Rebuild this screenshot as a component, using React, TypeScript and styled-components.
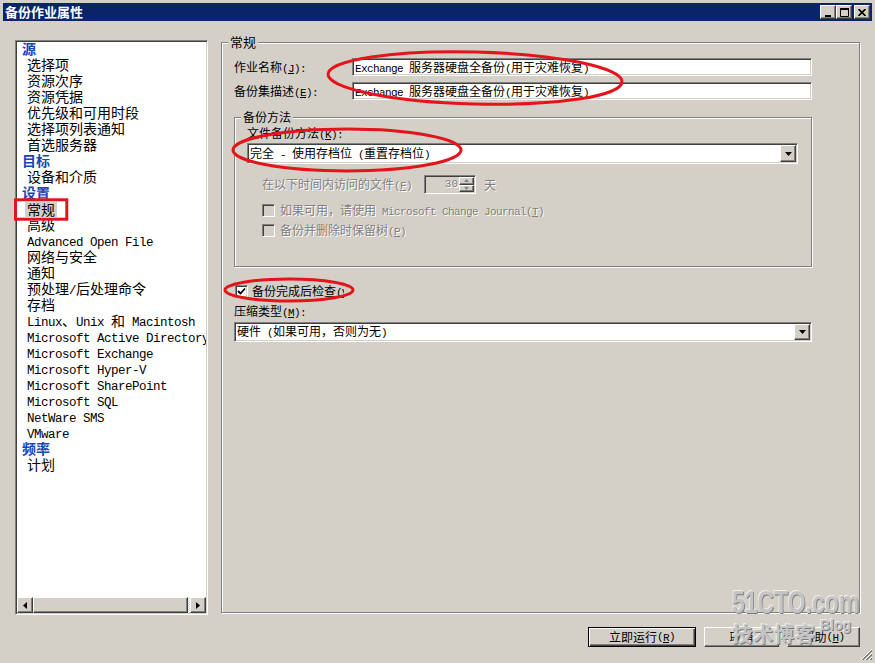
import React from "react";
import styled, { createGlobalStyle, css } from "styled-components";

const CJK = `"Noto Sans CJK SC", "Noto Sans", sans-serif`;
const MONO = `"Liberation Mono", "DejaVu Sans Mono", monospace`;

const GlobalStyle = createGlobalStyle`
  html, body { margin: 0; padding: 0; background: #d4d0c8; }
  body { font-family: ${CJK}; color: #000; }
  * { box-sizing: border-box; }
  #root { width: 875px; height: 663px; }
`;

const sunken = css`
  border: 1px solid;
  border-color: #808080 #ffffff #ffffff #808080;
  box-shadow: inset 1px 1px 0 #404040, inset -1px -1px 0 #d4d0c8;
`;

const raised = css`
  border: 1px solid;
  border-color: #ffffff #404040 #404040 #ffffff;
  box-shadow: inset -1px -1px 0 #808080;
  background: #d4d0c8;
`;

/* ---------- text helpers ---------- */
const Lat = styled.span<{ $s: number; $ls: number }>`
  font-family: ${MONO};
  font-size: ${(p) => p.$s}px;
  letter-spacing: ${(p) => p.$ls}px;
`;
const Ul = styled.span`
  text-decoration: underline;
`;

type LatSpec = { s: number; ls: number };
const SMALL: LatSpec = { s: 11, ls: -0.6 };
const LIST: LatSpec = { s: 12.5, ls: -0.5 };

function T({ s, lat }: { s: string; lat: LatSpec }) {
  const nodes: React.ReactNode[] = [];
  let buf = "";
  let bufLat = false;
  let k = 0;
  const flush = () => {
    if (!buf) return;
    nodes.push(
      bufLat ? (
        <Lat key={k++} $s={lat.s} $ls={lat.ls}>
          {buf}
        </Lat>
      ) : (
        <React.Fragment key={k++}>{buf}</React.Fragment>
      )
    );
    buf = "";
  };
  for (let i = 0; i < s.length; i++) {
    const c = s[i];
    if (c === "&" && i + 1 < s.length) {
      flush();
      const d = s[++i];
      const dl = d.charCodeAt(0) < 128;
      nodes.push(
        <Ul key={k++}>
          {dl ? (
            <Lat $s={lat.s} $ls={lat.ls}>
              {d}
            </Lat>
          ) : (
            d
          )}
        </Ul>
      );
      continue;
    }
    const isL = c.charCodeAt(0) < 128;
    if (buf && isL !== bufLat) flush();
    bufLat = isL;
    buf += c;
  }
  flush();
  return <>{nodes}</>;
}

/* ---------- window frame ---------- */
const Window = styled.div`
  position: relative;
  width: 875px;
  height: 663px;
  padding: 3px;
  background: #d4d0c8;
  display: flex;
  flex-direction: column;
  overflow: hidden;
`;

const TitleBar = styled.div`
  flex: none;
  height: 18px;
  background: #0a246a;
  display: flex;
  align-items: center;
  justify-content: space-between;
  padding: 0 2px;
`;

const TitleText = styled.span`
  color: #fff;
  font-weight: bold;
  font-size: 13px;
  line-height: 18px;
`;

const CaptionButtons = styled.div`
  display: flex;
`;

const CaptionButton = styled.div<{ $gap?: boolean }>`
  width: 16px;
  height: 14px;
  margin-left: ${(p) => (p.$gap ? 2 : 0)}px;
  ${raised};
  display: flex;
  align-items: center;
  justify-content: center;
`;

const Body = styled.div`
  flex: 1;
  display: flex;
  flex-direction: column;
  padding: 13px 12px 0 12px;
`;

const MainRow = styled.div`
  display: flex;
  gap: 13px;
  align-items: flex-start;
`;

/* ---------- navigation list ---------- */
const NavPanel = styled.div`
  margin-top: 6px;
  width: 193px;
  height: 575px;
  ${sunken};
  background: #fff;
  padding: 1px;
  display: flex;
  flex-direction: column;
`;

const NavList = styled.div`
  flex: 1;
  overflow: hidden;
`;

const NavRow = styled.div<{ $head?: boolean }>`
  height: 16px;
  line-height: 13px;
  font-size: 14px;
  white-space: nowrap;
  padding-left: ${(p) => (p.$head ? 5 : 10)}px;
  color: ${(p) => (p.$head ? "#1846b4" : "#000")};
  font-weight: ${(p) => (p.$head ? "bold" : "normal")};
`;

const Selected = styled.span`
  display: inline-block;
  height: 15px;
  line-height: 15px;
  margin-left: -2px;
  padding: 0 2px;
  background: #d4d0c8;
`;

const HScroll = styled.div`
  flex: none;
  height: 16px;
  display: flex;
`;

const ScrollBtn = styled.div`
  width: 16px;
  height: 16px;
  ${raised};
  display: flex;
  align-items: center;
  justify-content: center;
`;

const Thumb = styled.div`
  width: 155px;
  height: 16px;
  ${raised};
`;

const Track = styled.div`
  flex: 1;
  background: repeating-conic-gradient(#ffffff 0 25%, #d4d0c8 0 50%) 0 0 / 2px 2px;
`;

/* ---------- group boxes ---------- */
const GroupBox = styled.fieldset<{ $w?: number; $h?: number; $mt?: number }>`
  margin: ${(p) => p.$mt ?? 0}px 0 0 0;
  padding: 0;
  min-width: 0;
  width: ${(p) => (p.$w ? `${p.$w}px` : "auto")};
  height: ${(p) => (p.$h ? `${p.$h}px` : "auto")};
  border: 1px solid #808080;
  box-shadow: inset 1px 1px 0 #fff, 1px 1px 0 #fff;
`;

const Legend = styled.legend<{ $size: number; $lh: number }>`
  margin-left: 6px;
  padding: 0 2px;
  height: ${(p) => p.$lh}px;
  font-size: ${(p) => p.$size}px;
  line-height: ${(p) => p.$lh}px;
  background: #d4d0c8;
`;

const GroupBody = styled.div<{ $pad: string }>`
  padding: ${(p) => p.$pad};
  display: flex;
  flex-direction: column;
`;

const FormGrid = styled.div`
  display: grid;
  grid-template-columns: 118px 1fr;
  row-gap: 6px;
  align-items: center;
`;

const Label = styled.label<{ $mt?: number; $mb?: number }>`
  display: block;
  height: 14px;
  font-size: 12px;
  line-height: 14px;
  white-space: nowrap;
  margin-top: ${(p) => p.$mt ?? 0}px;
  margin-bottom: ${(p) => p.$mb ?? 0}px;
`;

const TextBox = styled.div`
  height: 18px;
  ${sunken};
  background: #fff;
  padding: 0 2px 0 2px;
  font-size: 12px;
  line-height: 16px;
  white-space: nowrap;
  overflow: hidden;
`;

const Combo = styled.div<{ $h: number }>`
  flex: none;
  height: ${(p) => p.$h}px;
  ${sunken};
  background: #fff;
  padding: 1px;
  display: flex;
`;

const ComboText = styled.div`
  flex: 1;
  font-size: 12px;
  line-height: 14px;
  padding-left: 1px;
  white-space: nowrap;
  overflow: hidden;
  display: flex;
  align-items: center;
`;

const ComboButton = styled.div`
  width: 16px;
  ${raised};
  display: flex;
  align-items: center;
  justify-content: center;
`;

const OptionRow = styled.div<{ $mt: number; $pl: number; $h: number }>`
  flex: none;
  display: flex;
  align-items: center;
  height: ${(p) => p.$h}px;
  margin-top: ${(p) => p.$mt}px;
  padding-left: ${(p) => p.$pl}px;
`;

const DimText = styled.span<{ $w?: number }>`
  color: #808080;
  text-shadow: 1px 1px 0 #fff;
  font-size: 12px;
  line-height: 14px;
  white-space: nowrap;
  ${(p) => (p.$w ? `width: ${p.$w}px; flex: none;` : "")}
`;

const Spin = styled.div`
  width: 52px;
  height: 19px;
  ${sunken};
  background: #d4d0c8;
  padding: 1px;
  display: flex;
`;

const SpinValue = styled.div`
  flex: 1;
  text-align: right;
  padding-right: 1px;
  font-family: ${MONO};
  font-size: 11px;
  line-height: 15px;
  color: #808080;
  text-shadow: 1px 1px 0 #fff;
`;

const SpinButtons = styled.div`
  width: 15px;
  display: flex;
  flex-direction: column;
`;

const SpinButton = styled.div`
  flex: 1;
  ${raised};
  display: flex;
  align-items: center;
  justify-content: center;
`;

const DimUnit = styled(DimText)`
  margin-left: 8px;
`;

const CheckBox = styled.span<{ $disabled?: boolean }>`
  width: 13px;
  height: 13px;
  flex: none;
  ${sunken};
  background: ${(p) => (p.$disabled ? "#d4d0c8" : "#fff")};
  display: inline-flex;
  align-items: center;
  justify-content: center;
`;

const CheckLabel = styled.span<{ $gap: number; $clip?: number }>`
  margin-left: ${(p) => p.$gap}px;
  height: 14px;
  font-size: 12px;
  line-height: 14px;
  white-space: nowrap;
  overflow: hidden;
  ${(p) => (p.$clip ? `width: ${p.$clip}px; flex: none;` : "")}
`;

/* ---------- dialog buttons ---------- */
const ButtonRow = styled.div`
  display: flex;
  justify-content: flex-end;
  gap: 8px;
  margin-top: 12px;
`;

const PushButton = styled.div<{ $w: number; $default?: boolean }>`
  width: ${(p) => p.$w}px;
  height: 20px;
  font-size: 12px;
  line-height: 14px;
  display: flex;
  align-items: center;
  justify-content: center;
  background: #d4d0c8;
  ${(p) =>
    p.$default
      ? css`
          border: 1px solid #000;
          box-shadow: inset 1px 1px 0 #fff, inset -1px -1px 0 #404040,
            inset -2px -2px 0 #808080;
        `
      : raised};
`;

/* ---------- overlays ---------- */
const Watermark = styled.div`
  position: absolute;
  left: 732px;
  top: 586px;
  width: 135px;
  pointer-events: none;
  color: #c4c4c4;
  text-shadow: 1px 1px 0 #7c7c7c, -1px -1px 0 #efefef;
`;

const WmBig = styled.div`
  font-family: "Liberation Sans", sans-serif;
  font-weight: bold;
  font-size: 31px;
  line-height: 34px;
  transform: scaleX(0.74);
  transform-origin: left center;
  white-space: nowrap;
`;

const WmLine = styled.div`
  display: flex;
  align-items: flex-start;
  margin-top: 2px;
`;

const WmCjk = styled.span`
  font-weight: bold;
  font-size: 20px;
  line-height: 24px;
  letter-spacing: 1px;
`;

const WmBlog = styled.span`
  font-family: "Liberation Sans", sans-serif;
  font-weight: bold;
  font-size: 14px;
  line-height: 14px;
  margin-left: 4px;
  margin-top: -4px;
`;

const Annotations = styled.svg`
  position: absolute;
  left: 0;
  top: 0;
  pointer-events: none;
`;

const Grip = styled.svg`
  position: absolute;
  right: 2px;
  bottom: 2px;
`;

/* ---------- icons ---------- */
const DownArrow = () => (
  <svg width="7" height="4" viewBox="0 0 7 4">
    <path d="M0 0h7L3.5 4z" fill="#000" />
  </svg>
);

const TinyArrow = ({ up }: { up?: boolean }) => (
  <svg width="5" height="3" viewBox="0 0 5 3">
    <path d={up ? "M0 3h5L2.5 0z" : "M0 0h5L2.5 3z"} fill="#808080" />
  </svg>
);

const SideArrow = ({ left }: { left?: boolean }) => (
  <svg width="4" height="7" viewBox="0 0 4 7">
    <path d={left ? "M4 0v7L0 3.5z" : "M0 0v7L4 3.5z"} fill="#000" />
  </svg>
);

const Tick = () => (
  <svg width="9" height="9" viewBox="0 0 9 9">
    <path d="M1 4l2.5 2.5L8 1.5" fill="none" stroke="#000" strokeWidth="1.8" />
  </svg>
);

type NavItem = { t: string; head?: boolean; sel?: boolean };

const nav: NavItem[] = [
  { t: "源", head: true },
  { t: "选择项" },
  { t: "资源次序" },
  { t: "资源凭据" },
  { t: "优先级和可用时段" },
  { t: "选择项列表通知" },
  { t: "首选服务器" },
  { t: "目标", head: true },
  { t: "设备和介质" },
  { t: "设置", head: true },
  { t: "常规", sel: true },
  { t: "高级" },
  { t: "Advanced Open File" },
  { t: "网络与安全" },
  { t: "通知" },
  { t: "预处理/后处理命令" },
  { t: "存档" },
  { t: "Linux、Unix 和 Macintosh" },
  { t: "Microsoft Active Directory" },
  { t: "Microsoft Exchange" },
  { t: "Microsoft Hyper-V" },
  { t: "Microsoft SharePoint" },
  { t: "Microsoft SQL" },
  { t: "NetWare SMS" },
  { t: "VMware" },
  { t: "频率", head: true },
  { t: "计划" },
];

export default function App() {
  return (
    <>
      <GlobalStyle />
      <Window>
        <TitleBar>
          <TitleText>备份作业属性</TitleText>
          <CaptionButtons>
            <CaptionButton>
              <svg width="8" height="9" viewBox="0 0 8 9">
                <rect x="1" y="7" width="6" height="2" fill="#000" />
              </svg>
            </CaptionButton>
            <CaptionButton>
              <svg width="9" height="9" viewBox="0 0 9 9">
                <path d="M0.5 1.5h8v7h-8z" fill="none" stroke="#000" />
                <rect x="0" y="0" width="9" height="2" fill="#000" />
              </svg>
            </CaptionButton>
            <CaptionButton $gap>
              <svg width="8" height="7" viewBox="0 0 8 7">
                <path d="M0.5 0l7 7M7.5 0l-7 7" stroke="#000" strokeWidth="1.6" />
              </svg>
            </CaptionButton>
          </CaptionButtons>
        </TitleBar>

        <Body>
          <MainRow>
            <NavPanel>
              <NavList>
                {nav.map((n, i) => (
                  <NavRow key={i} $head={n.head}>
                    {n.sel ? (
                      <Selected>
                        <T s={n.t} lat={LIST} />
                      </Selected>
                    ) : (
                      <T s={n.t} lat={LIST} />
                    )}
                  </NavRow>
                ))}
              </NavList>
              <HScroll>
                <ScrollBtn>
                  <SideArrow left />
                </ScrollBtn>
                <Thumb />
                <Track />
                <ScrollBtn>
                  <SideArrow />
                </ScrollBtn>
              </HScroll>
            </NavPanel>

            <GroupBox $w={639} $h={579}>
              <Legend $size={13} $lh={16}>
                常规
              </Legend>
              <GroupBody $pad="8px 47px 0 12px">
                <FormGrid>
                  <Label>
                    <T s="作业名称(&J):" lat={SMALL} />
                  </Label>
                  <TextBox>
                    <T s="Exchange 服务器硬盘全备份(用于灾难恢复)" lat={SMALL} />
                  </TextBox>
                  <Label>
                    <T s="备份集描述(&E):" lat={SMALL} />
                  </Label>
                  <TextBox>
                    <T s="Exchange 服务器硬盘全备份(用于灾难恢复)" lat={SMALL} />
                  </TextBox>
                </FormGrid>

                <GroupBox $mt={10}>
                  <Legend $size={12} $lh={14}>
                    备份方法
                  </Legend>
                  <GroupBody $pad="2px 13px 26px 12px">
                    <Label $mb={3}>
                      <T s="文件备份方法(&K):" lat={SMALL} />
                    </Label>
                    <Combo $h={21}>
                      <ComboText>
                        <span>
                          <T s="完全 - 使用存档位 (重置存档位)" lat={SMALL} />
                        </span>
                      </ComboText>
                      <ComboButton>
                        <DownArrow />
                      </ComboButton>
                    </Combo>
                    <OptionRow $mt={11} $pl={15} $h={19}>
                      <DimText $w={162}>
                        <T s="在以下时间内访问的文件(&F)" lat={SMALL} />
                      </DimText>
                      <Spin>
                        <SpinValue>30</SpinValue>
                        <SpinButtons>
                          <SpinButton>
                            <TinyArrow up />
                          </SpinButton>
                          <SpinButton>
                            <TinyArrow />
                          </SpinButton>
                        </SpinButtons>
                      </Spin>
                      <DimUnit>天</DimUnit>
                    </OptionRow>
                    <OptionRow $mt={6} $pl={15} $h={20}>
                      <CheckBox $disabled />
                      <CheckLabel $gap={5}>
                        <DimText>
                          <T s="如果可用，请使用 Microsoft Change Journal(&T)" lat={SMALL} />
                        </DimText>
                      </CheckLabel>
                    </OptionRow>
                    <OptionRow $mt={0} $pl={15} $h={20}>
                      <CheckBox $disabled />
                      <CheckLabel $gap={5}>
                        <DimText>
                          <T s="备份并删除时保留树(&P)" lat={SMALL} />
                        </DimText>
                      </CheckLabel>
                    </OptionRow>
                  </GroupBody>
                </GroupBox>

                <OptionRow $mt={14} $pl={1} $h={20}>
                  <CheckBox>
                    <Tick />
                  </CheckBox>
                  <CheckLabel $gap={4} $clip={92}>
                    <T s="备份完成后检查(&V)" lat={SMALL} />
                  </CheckLabel>
                </OptionRow>
                <Label $mt={3} $mb={4}>
                  <T s="压缩类型(&M):" lat={SMALL} />
                </Label>
                <Combo $h={20}>
                  <ComboText>
                    <span>
                      <T s="硬件 (如果可用，否则为无)" lat={SMALL} />
                    </span>
                  </ComboText>
                  <ComboButton>
                    <DownArrow />
                  </ComboButton>
                </Combo>
              </GroupBody>
            </GroupBox>
          </MainRow>

          <ButtonRow>
            <PushButton $w={108} $default>
              <T s="立即运行(&R)" lat={SMALL} />
            </PushButton>
            <PushButton $w={75}>取消</PushButton>
            <PushButton $w={73}>
              <T s="帮助(&H)" lat={SMALL} />
            </PushButton>
          </ButtonRow>
        </Body>

        <Watermark>
          <WmBig>51CTO.com</WmBig>
          <WmLine>
            <WmCjk>技术博客</WmCjk>
            <WmBlog>Blog</WmBlog>
          </WmLine>
        </Watermark>

        <Annotations width="875" height="663" viewBox="0 0 875 663">
          <g fill="none" stroke="#e3151b" strokeWidth="3">
            <rect x="15.5" y="199.8" width="51.3" height="19.4" />
            <ellipse cx="475" cy="78" rx="147" ry="26" transform="rotate(1.5 475 78)" />
            <ellipse cx="347" cy="150" rx="114" ry="21" />
            <ellipse cx="289" cy="290" rx="64" ry="11" />
          </g>
        </Annotations>

        <Grip width="12" height="12" viewBox="0 0 12 12">
          <g strokeWidth="1">
            <path d="M11 1L1 11M11 5L5 11M11 9L9 11" stroke="#808080" />
            <path d="M11 2L2 11M11 6L6 11M11 10L10 11" stroke="#808080" />
            <path d="M11 0L0 11M11 4L4 11M11 8L8 11" stroke="#ffffff" />
          </g>
        </Grip>
      </Window>
    </>
  );
}
